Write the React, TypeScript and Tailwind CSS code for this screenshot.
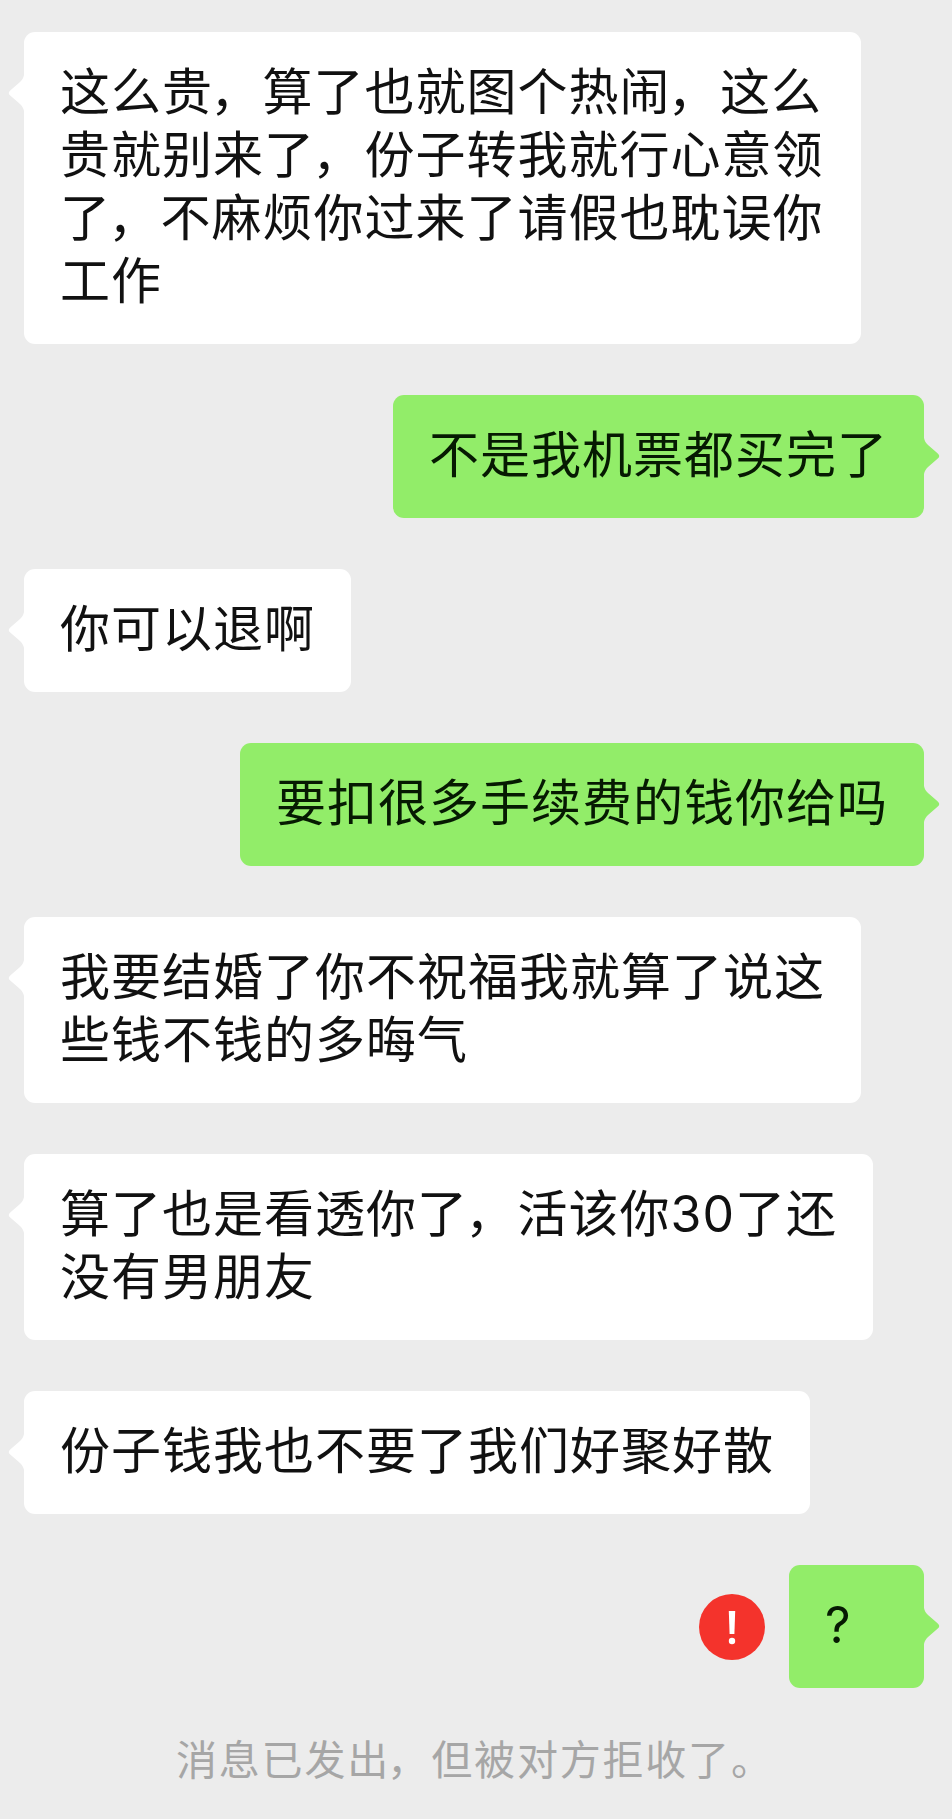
import React from 'react';
import clsx from 'clsx';

interface Message {
  id: number;
  from: 'me' | 'friend';
  lines: string[];
  width?: string;
  failed?: boolean;
}

const messages: Message[] = [
  {
    id: 1,
    from: 'friend',
    width: 'w-[837px]',
    lines: [
      '这么贵，算了也就图个热闹，这么',
      '贵就别来了，份子转我就行心意领',
      '了，不麻烦你过来了请假也耽误你',
      '工作',
    ],
  },
  { id: 2, from: 'me', lines: ['不是我机票都买完了'] },
  { id: 3, from: 'friend', lines: ['你可以退啊'] },
  { id: 4, from: 'me', lines: ['要扣很多手续费的钱你给吗'] },
  { id: 5, from: 'friend', lines: ['我要结婚了你不祝福我就算了说这', '些钱不钱的多晦气'] },
  {
    id: 6,
    from: 'friend',
    width: 'w-[849px]',
    lines: ['算了也是看透你了，活该你30了还', '没有男朋友'],
  },
  { id: 7, from: 'friend', lines: ['份子钱我也不要了我们好聚好散'] },
  { id: 8, from: 'me', lines: ['?'], width: 'w-[135px]', failed: true },
];

// Full-width commas sit a little closer to the character before them
function Line({ text }: { text: string }) {
  return (
    <>
      {text.split('，').map((part, i) => (
        <React.Fragment key={i}>
          {i > 0 && <span className="-ml-[3px] mr-[1.5px]">，</span>}
          {part}
        </React.Fragment>
      ))}
    </>
  );
}

function Tail({ mine }: { mine: boolean }) {
  return (
    <svg
      viewBox="0 0 16 36"
      className={clsx(
        'absolute top-[43px] h-9 w-4',
        mine ? 'left-full text-[#92ed69]' : 'right-full -scale-x-100 text-white'
      )}
      fill="currentColor"
    >
      <path d="M0 0C0.5 3 2 5 4 7L13.5 15.2Q17 18 13.5 20.8L4 29C2 31 0.5 33 0 36Z" />
    </svg>
  );
}

function FailedBadge() {
  return (
    <svg viewBox="0 0 66 66" className="mr-6 size-[66px] shrink-0">
      <circle cx="33" cy="33" r="33" fill="#f4332c" />
      <path d="M29.8 17H36.2L35.4 40H30.6Z" fill="#fff" />
      <circle cx="33" cy="47" r="3.2" fill="#fff" />
    </svg>
  );
}

function Bubble({ message }: { message: Message }) {
  const mine = message.from === 'me';
  return (
    <div className={clsx('flex items-center', mine ? 'justify-end' : 'justify-start')}>
      {message.failed && <FailedBadge />}
      <div
        className={clsx(
          'relative rounded-[11px] px-9 pt-[29px] pb-[31px]',
          message.width,
          mine ? 'bg-[#92ed69] text-[#061a02]' : 'bg-white text-[#111111]'
        )}
      >
        <Tail mine={mine} />
        {message.lines.map(line => (
          <p key={line} className="text-[50px] leading-[63px] tracking-[1px] whitespace-nowrap">
            <Line text={line} />
          </p>
        ))}
      </div>
    </div>
  );
}

export default function App() {
  return (
    <main className="h-[1819px] w-[952px] overflow-hidden bg-[#ececec] pt-8 font-['Inter','Noto_Sans_CJK_SC',sans-serif]">
      <div className="flex flex-col gap-[51px] pr-7 pl-6">
        {messages.map(message => (
          <Bubble key={message.id} message={message} />
        ))}
      </div>
      <p className="mt-[42px] pl-[176px] text-[41px] leading-[60px] tracking-[1.8px] whitespace-nowrap text-[#a6a6a6]">
        <Line text="消息已发出，但被对方拒收了。" />
      </p>
    </main>
  );
}
